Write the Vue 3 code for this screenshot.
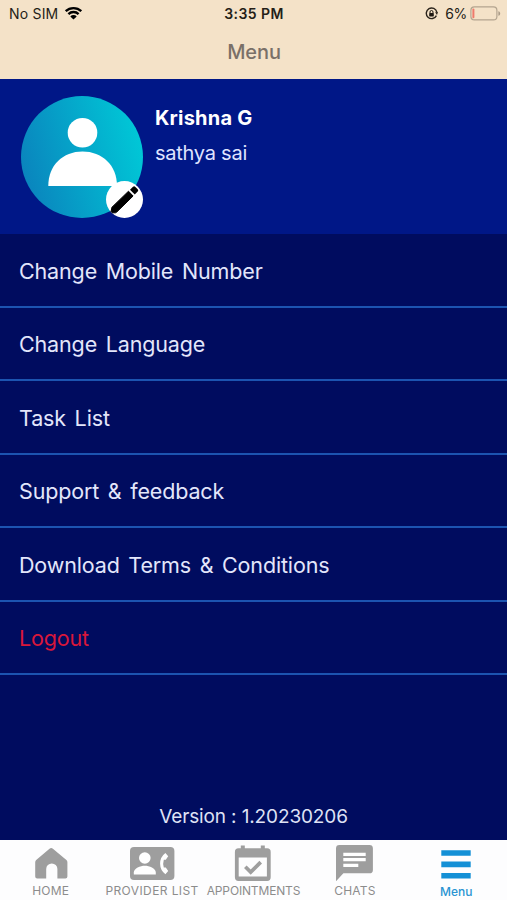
<script setup>
import { ref } from 'vue'

const items = [
  { id: 'mobile', label: 'Change Mobile Number' },
  { id: 'language', label: 'Change Language' },
  { id: 'tasks', label: 'Task List' },
  { id: 'support', label: 'Support & feedback' },
  { id: 'terms', label: 'Download Terms & Conditions' },
  { id: 'logout', label: 'Logout' }
]

const tabs = [
  { id: 'home', label: 'HOME' },
  { id: 'providers', label: 'PROVIDER LIST' },
  { id: 'appointments', label: 'APPOINTMENTS' },
  { id: 'chats', label: 'CHATS' },
  { id: 'menu', label: 'Menu' }
]

const active = ref('menu')
</script>

<template>
  <div class="screen">
    <header>
      <div class="status">
        <div class="left">
          <span class="carrier">No SIM</span>
          <svg class="wifi" width="19" height="14" viewBox="0 0 18 14">
            <path d="M1.2 5.2a11.2 11.2 0 0 1 15.6 0M3.9 8.1a7.3 7.3 0 0 1 10.2 0" fill="none" stroke="#000" stroke-width="2.3" />
            <path d="M9 13.6 5.8 10.4a4.6 4.6 0 0 1 6.4 0z" />
          </svg>
        </div>
        <span class="time">3:35 PM</span>
        <div class="right">
          <svg width="13" height="13" viewBox="0 0 13 13">
            <path d="M11.8 5.2A5.3 5.3 0 1 0 11.4 8.6" fill="none" stroke="#2b241c" stroke-width="1.4" />
            <path d="m10.1 5.2 2.9-.2-1 3z" fill="#2b241c" />
            <rect x="4.2" y="6" width="4.6" height="3.4" rx=".6" fill="#1c1711" />
            <path d="M5 6V5a1.5 1.5 0 0 1 3 0v1" fill="none" stroke="#1c1711" stroke-width="1" />
          </svg>
          <span class="percent">6%</span>
          <svg width="31" height="15" viewBox="0 0 31 15">
            <rect x=".9" y=".9" width="26" height="13" rx="3.5" fill="none" stroke="#b3a48f" stroke-width="1.2" />
            <rect x="2.4" y="2.5" width="2" height="9.8" rx="1" fill="#ef7a6c" />
            <path d="M28.4 5.2c2.4.7 2.4 3.9 0 4.6z" fill="#a99a86" />
          </svg>
        </div>
      </div>
      <h1>Menu</h1>
    </header>

    <section class="profile">
      <div class="avatar">
        <svg width="122" height="122" viewBox="0 0 122 122">
          <circle cx="61.5" cy="36.8" r="14.8" fill="#fff" />
          <path d="M27.3 90C27.3 69 42 55.5 61.5 55.5S96 69 96 90z" fill="#fff" />
        </svg>
        <button class="edit">
          <svg width="37" height="37" viewBox="0 0 37 37">
            <path d="m6 26.2 16.5-16 4.6 4.8L11 30.8l-1.5 1H6.2L5 30.5z" stroke="#000" stroke-width="1" stroke-linejoin="round" />
            <path d="m24 8.8 3-3q1.2-1 2.4.1l2.3 2.3q1.1 1.2 0 2.4l-2.9 3z" />
          </svg>
        </button>
      </div>
      <div class="who">
        <strong>Krishna G</strong>
        <span>sathya sai</span>
      </div>
    </section>

    <ul class="menu">
      <li v-for="item in items" :key="item.id" :class="item.id">
        <span>{{ item.label }}</span>
      </li>
    </ul>

    <p class="version">Version : 1.20230206</p>

    <nav>
      <a v-for="tab in tabs" :key="tab.id" :class="[tab.id, { active: active === tab.id }]" @click="active = tab.id">
        <svg v-if="tab.id === 'home'" width="46" height="42" viewBox="0 0 46 42">
          <path d="M21.5 8.8q1.7-1.4 3.4 0L38.4 20q1 .9 1 2.2v14.4q0 2-2 2h-8V29a5.6 5.6 0 0 0-11.2 0v9.6H9.2q-2 0-2-2V22.2q0-1.3 1-2.2z" />
        </svg>
        <svg v-else-if="tab.id === 'providers'" width="46" height="42" viewBox="0 0 46 42">
          <rect x="1" y="7" width="44.4" height="33" rx="4" />
          <circle cx="15.8" cy="18" r="5.8" fill="#fff" />
          <path d="M4.8 34.5v-2c0-4.2 6.6-6.8 11-6.8s11 2.6 11 6.8v2z" fill="#fff" />
          <path d="m36.4 12.9 2.8 3.4-2.4 3.5h-2a13 13 0 0 0 0 7.6h2l2.4 3.6-2.8 3.3q-5.3-4-5.3-10.7t5.3-10.7z" fill="#fff" />
        </svg>
        <svg v-else-if="tab.id === 'appointments'" width="46" height="42" viewBox="0 0 46 42">
          <path fill-rule="evenodd" d="M8.5 8.3h2.3V5.4h4v2.9h16V5.4h4v2.9h2.3q3.6 0 3.6 3.6v25.4q0 3.6-3.6 3.6H8.5q-3.6 0-3.6-3.6V11.9q0-3.6 3.6-3.6zM8.7 17.6v19h28.2v-19z" />
          <path d="m15.3 26.8 5.4 5.3 10-10" fill="none" stroke="#9e9e9e" stroke-width="3.7" />
        </svg>
        <svg v-else-if="tab.id === 'chats'" width="46" height="42" viewBox="0 0 46 42">
          <path d="M7.4 5.1h30.1q3.4 0 3.4 3.4v21.4q0 3.4-3.4 3.4H11.4L4 41.2V8.5q0-3.4 3.4-3.4z" />
          <path d="M11.3 14.3h22.4M11.3 19.7h22.4M11.3 25.3h15" stroke="#fff" stroke-width="3.2" />
        </svg>
        <svg v-else width="46" height="42" viewBox="0 0 46 42">
          <path d="M8.3 12h29.4M8.3 23.4h29.4M8.3 34.8h29.4" stroke="#1490d6" stroke-width="5.6" />
        </svg>
        <span>{{ tab.label }}</span>
      </a>
    </nav>
  </div>
</template>

<style>
body {
  margin: 0;
}
</style>

<style scoped>
.screen {
  width: 507px;
  height: 900px;
  display: flex;
  flex-direction: column;
  overflow: hidden;
  background-color: #000c5f;
  font-family: Inter, "Liberation Sans", sans-serif;
}

header {
  height: 79px;
  flex: none;
  background-color: #f4e2c8;
}

.status {
  height: 27px;
  display: grid;
  grid-template-columns: 1fr auto 1fr;
  align-items: center;
  padding: 0 6px 0 9px;
  font-size: 14px;
  color: #251e17;
}

.left,
.right {
  display: flex;
  align-items: center;
}

.right {
  justify-content: flex-end;
}

.carrier {
  letter-spacing: 0.2px;
}

.wifi {
  margin-left: 6px;
  margin-top: -2px;
}

.percent {
  margin: 0 3px 0 7px;
  letter-spacing: -0.3px;
}

.time {
  margin-right: 2px;
  font-weight: 600;
  letter-spacing: 0.45px;
}

h1 {
  margin: 10px 0 0 1px;
  font-size: 20px;
  line-height: 30px;
  font-weight: 500;
  letter-spacing: -0.1px;
  text-align: center;
  color: #7a7068;
}

.profile {
  height: 155px;
  flex: none;
  box-sizing: border-box;
  display: flex;
  padding: 17px 20px 17px 20.7px;
  background-color: #001787;
}

.avatar {
  position: relative;
  width: 122px;
  height: 122px;
  border-radius: 50%;
  background: linear-gradient(75deg, #0a84bd 8%, #00c8d7 92%);
}

.edit {
  position: absolute;
  right: 0;
  bottom: 0;
  width: 37px;
  height: 37px;
  padding: 0;
  border: none;
  border-radius: 50%;
  background-color: #fff;
}

.edit svg {
  display: block;
}

.who {
  display: flex;
  flex-direction: column;
  margin: 5px 0 0 12.3px;
  color: #fff;
}

.who strong {
  font-size: 20px;
  line-height: 35px;
  font-weight: 700;
  letter-spacing: 0.2px;
}

.who span {
  font-size: 20px;
  line-height: 35px;
  letter-spacing: -0.25px;
  color: #dfe3ff;
}

.menu {
  list-style: none;
  margin: 0.6px 0 0;
  padding: 0;
}

.menu li {
  height: 73.4px;
  box-sizing: border-box;
  display: flex;
  align-items: center;
  padding: 1.6px 0 0 19px;
  border-bottom: 2px solid #1c54b0;
  font-size: 21.5px;
  letter-spacing: -0.15px;
  word-spacing: 2.8px;
  color: #e3e6fb;
}

.menu .logout {
  color: #d9173a;
}

.version {
  margin: auto 0 10px;
  font-size: 19px;
  line-height: 26px;
  letter-spacing: -0.13px;
  text-align: center;
  color: #dfe2f5;
}

nav {
  height: 60px;
  flex: none;
  display: grid;
  grid-template-columns: repeat(5, 1fr);
  background-color: #fdfdfe;
}

nav a {
  display: flex;
  flex-direction: column;
  align-items: center;
  font-size: 12px;
  line-height: 16px;
  letter-spacing: 0.2px;
  white-space: nowrap;
  color: #8c8c8c;
}

nav svg {
  flex: none;
  margin-bottom: 1.4px;
  fill: #9e9e9e;
}

nav .providers {
  letter-spacing: 0.4px;
}

nav .appointments {
  letter-spacing: -0.15px;
}

nav .active {
  color: #2a94d2;
  font-weight: 500;
  letter-spacing: 0;
}
</style>
